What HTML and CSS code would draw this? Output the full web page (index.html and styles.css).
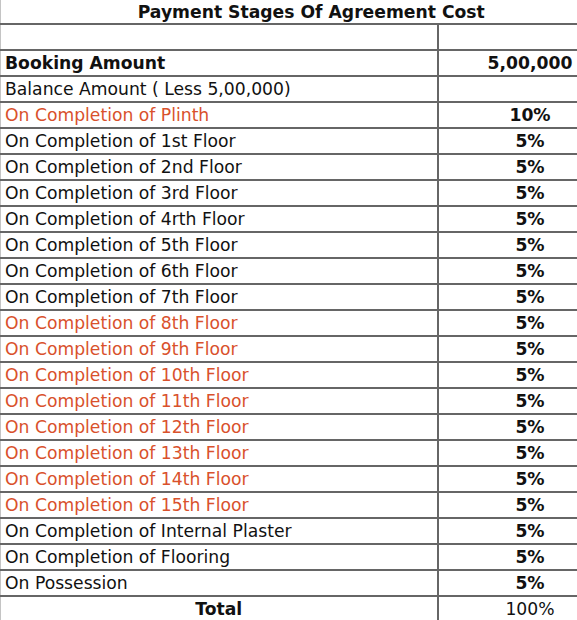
FILE: index.html
```html
<!DOCTYPE html>
<html>
<head>
<meta charset="utf-8">
<link rel="stylesheet" href="styles.css">
</head>
<body>
<table class="pay">
  <colgroup><col class="c1"><col class="c2"></colgroup>
  <tr class="title"><td colspan="2">Payment Stages Of Agreement Cost</td></tr>
  <tr><td class="lbl">&nbsp;</td><td class="val"></td></tr>
  <tr class="bold"><td class="lbl">Booking Amount</td><td class="val">5,00,000</td></tr>
  <tr><td class="lbl">Balance Amount ( Less 5,00,000)</td><td class="val"></td></tr>
  <tr><td class="lbl hl">On Completion of Plinth</td><td class="val b">10%</td></tr>
  <tr><td class="lbl">On Completion of 1st Floor</td><td class="val b">5%</td></tr>
  <tr><td class="lbl">On Completion of 2nd Floor</td><td class="val b">5%</td></tr>
  <tr><td class="lbl">On Completion of 3rd Floor</td><td class="val b">5%</td></tr>
  <tr><td class="lbl">On Completion of 4rth Floor</td><td class="val b">5%</td></tr>
  <tr><td class="lbl">On Completion of 5th Floor</td><td class="val b">5%</td></tr>
  <tr><td class="lbl">On Completion of 6th Floor</td><td class="val b">5%</td></tr>
  <tr><td class="lbl">On Completion of 7th Floor</td><td class="val b">5%</td></tr>
  <tr><td class="lbl hl">On Completion of 8th Floor</td><td class="val b">5%</td></tr>
  <tr><td class="lbl hl">On Completion of 9th Floor</td><td class="val b">5%</td></tr>
  <tr><td class="lbl hl">On Completion of 10th Floor</td><td class="val b">5%</td></tr>
  <tr><td class="lbl hl">On Completion of 11th Floor</td><td class="val b">5%</td></tr>
  <tr><td class="lbl hl">On Completion of 12th Floor</td><td class="val b">5%</td></tr>
  <tr><td class="lbl hl">On Completion of 13th Floor</td><td class="val b">5%</td></tr>
  <tr><td class="lbl hl">On Completion of 14th Floor</td><td class="val b">5%</td></tr>
  <tr><td class="lbl hl">On Completion of 15th Floor</td><td class="val b">5%</td></tr>
  <tr><td class="lbl">On Completion of Internal Plaster</td><td class="val b">5%</td></tr>
  <tr><td class="lbl">On Completion of Flooring</td><td class="val b">5%</td></tr>
  <tr><td class="lbl">On Possession</td><td class="val b">5%</td></tr>
  <tr><td class="lbl total">Total</td><td class="val">100%</td></tr>
</table>
</body>
</html>
```
FILE: styles.css
```css
html, body {
  margin: 0;
  padding: 0;
  background: #fff;
  overflow: hidden;
}
.pay {
  border-collapse: collapse;
  width: 622px;
  table-layout: fixed;
  font-family: "DejaVu Sans", sans-serif;
  font-size: 17.2px;
  color: #111;
}
.c1 {
  width: 437px;
}
.c2 {
  width: 185px;
}
.pay td {
  border: 2px solid #666;
  height: 26px;
  padding: 0 0 0 4px;
  line-height: 20px;
  white-space: nowrap;
  vertical-align: middle;
  box-sizing: border-box;
}
.pay td.lbl {
  border-left: 1px solid #c4c4c4;
}
.pay td.val {
  text-align: center;
  padding: 0;
}
.pay .title td {
  border-top: none;
  border-left: 1px solid #c4c4c4;
  text-align: center;
  font-weight: bold;
  height: 24px;
  padding: 0;
}
.bold td, .b {
  font-weight: bold;
}
.hl {
  color: #d9512c;
}
.pay td.total {
  text-align: center;
  font-weight: bold;
  padding: 0;
}
```
